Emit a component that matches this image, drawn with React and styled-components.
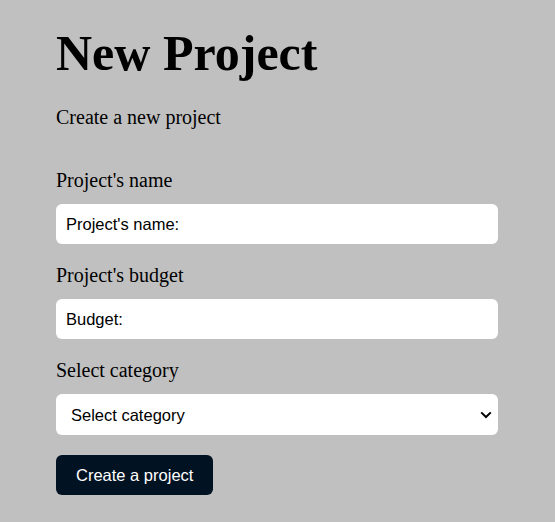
import React from 'react'
import styled, { createGlobalStyle } from 'styled-components'

const GlobalStyle = createGlobalStyle`
    html, body {
        margin: 0;
        padding: 0;
        background: #c0c0c0;
    }
    body {
        font-family: "Liberation Serif", "Times New Roman", serif;
        color: #000;
    }
`

function App() {
    return (
        <Page>
            <GlobalStyle />
            <Title>New Project</Title>
            <Subtitle>Create a new project</Subtitle>
            <Form onSubmit={e => e.preventDefault()}>
                <Field>
                    <Label htmlFor='name'>Project's name</Label>
                    <Input id='name' type='text' placeholder="Project's name:" />
                </Field>
                <Field>
                    <Label htmlFor='budget'>Project's budget</Label>
                    <Input id='budget' type='number' placeholder='Budget:' />
                </Field>
                <Field>
                    <Label htmlFor='category'>Select category</Label>
                    <SelectWrap>
                        <Select id='category' defaultValue=''>
                            <option value='' disabled>Select category</option>
                            <option value='infra'>Infraestrutura</option>
                            <option value='dev'>Desenvolvimento</option>
                            <option value='design'>Design</option>
                            <option value='plan'>Planejamento</option>
                        </Select>
                        <Chevron viewBox='0 0 12 8' aria-hidden='true'>
                            <path d='M1.2 1.4 L6 6 L10.8 1.4' />
                        </Chevron>
                    </SelectWrap>
                </Field>
                <SubmitButton type='submit'>Create a project</SubmitButton>
            </Form>
        </Page>
    )
}

const Page = styled.div`
    width: 442px;
    padding: 25px 0 28px 56px;
`
const Title = styled.h1`
    margin: 0;
    font-size: 50px;
    line-height: 56px;
    font-weight: bold;
`
const Subtitle = styled.p`
    margin: 24px 0 0;
    font-size: 20px;
    line-height: 24px;
`
const Form = styled.form`
    display: flex;
    flex-direction: column;
    gap: 19px;
    margin-top: 39px;
`
const Field = styled.div`
    display: flex;
    flex-direction: column;
    gap: 12px;
`
const Label = styled.label`
    font-size: 20px;
    line-height: 24px;
`
const Input = styled.input`
    box-sizing: border-box;
    width: 100%;
    height: 40px;
    padding: 0 10px;
    border: none;
    border-radius: 6px;
    background: #fff;
    font-family: "Liberation Sans", Arial, sans-serif;
    font-size: 16.5px;
    outline: none;
    &::placeholder {
        color: #000;
    }
    &::-webkit-outer-spin-button,
    &::-webkit-inner-spin-button {
        -webkit-appearance: none;
        margin: 0;
    }
`
const SelectWrap = styled.div`
    position: relative;
`
const Select = styled.select`
    display: block;
    box-sizing: border-box;
    width: 100%;
    height: 41px;
    padding: 0 30px 0 15px;
    border: none;
    border-radius: 6px;
    background: #fff;
    color: #000;
    font-family: "Liberation Sans", Arial, sans-serif;
    font-size: 16.5px;
    outline: none;
    appearance: none;
    -webkit-appearance: none;
`
const Chevron = styled.svg`
    position: absolute;
    right: 6px;
    top: 17px;
    width: 12px;
    height: 8px;
    fill: none;
    stroke: #000;
    stroke-width: 2;
    pointer-events: none;
`
const SubmitButton = styled.button`
    align-self: flex-start;
    margin-top: 1px;
    height: 40px;
    padding: 0 20px;
    border: none;
    border-radius: 6px;
    background: #011223;
    color: #fff;
    font-family: "Liberation Sans", Arial, sans-serif;
    font-size: 16.5px;
    cursor: pointer;
`

export default App
